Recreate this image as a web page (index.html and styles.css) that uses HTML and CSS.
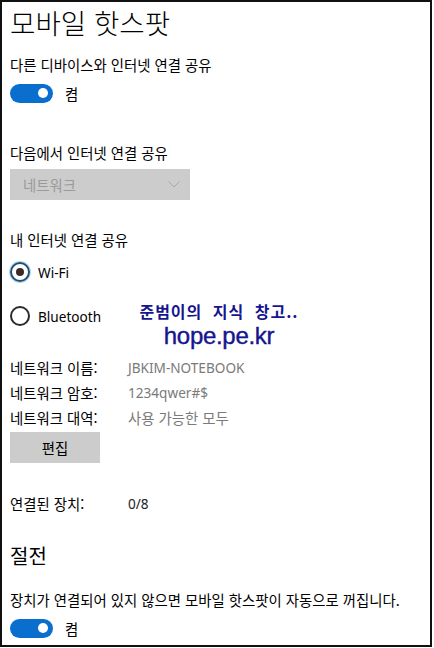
FILE: index.html
```html
<!DOCTYPE html>
<html lang="ko">
<head>
<meta charset="utf-8">
<title>모바일 핫스팟</title>
<link rel="stylesheet" href="styles.css">
</head>
<body>
<div class="page">
  <h1 class="title">모바일 핫스팟</h1>

  <div class="label label-first">다른 디바이스와 인터넷 연결 공유</div>
  <div class="toggle-row toggle-row-first">
    <span class="toggle"><span class="knob"></span></span>
    <span class="toggle-text">켬</span>
  </div>

  <div class="label label-share-from">다음에서 인터넷 연결 공유</div>
  <div class="dropdown">
    <span class="dropdown-text">네트워크</span>
    <svg class="chevron" width="12" height="7" viewBox="0 0 12 7"><path d="M0.5 0.5 L6 6 L11.5 0.5" fill="none" stroke="#a8a8a8" stroke-width="1"/></svg>
  </div>

  <div class="label label-share-over">내 인터넷 연결 공유</div>
  <div class="radio-row radio-row-first">
    <span class="radio radio-checked"><span class="dot"></span></span>
    <span class="radio-text">Wi-Fi</span>
  </div>
  <div class="radio-row radio-row-second">
    <span class="radio"></span>
    <span class="radio-text">Bluetooth</span>
  </div>

  <div class="info">
    <div class="info-row"><span class="info-key">네트워크 이름:</span><span class="info-val latin">JBKIM-NOTEBOOK</span></div>
    <div class="info-row"><span class="info-key">네트워크 암호:</span><span class="info-val latin">1234qwer#$</span></div>
    <div class="info-row"><span class="info-key">네트워크 대역:</span><span class="info-val">사용 가능한 모두</span></div>
  </div>
  <div class="button">편집</div>

  <div class="info-row connected"><span class="info-key">연결된 장치:</span><span class="info-val latin dark">0/8</span></div>

  <h2 class="subtitle">절전</h2>
  <div class="label label-desc">장치가 연결되어 있지 않으면 모바일 핫스팟이 자동으로 꺼집니다.</div>
  <div class="toggle-row toggle-row-second">
    <span class="toggle"><span class="knob"></span></span>
    <span class="toggle-text">켬</span>
  </div>

  <div class="watermark">
    <div class="wm-line1">준범이의 지식 창고..</div>
    <div class="wm-line2">hope.pe.kr</div>
  </div>
</div>
</body>
</html>
```
FILE: styles.css
```css
html, body {
  margin: 0;
  padding: 0;
  background: #fff;
}
body {
  font-family: "Noto Sans CJK KR", sans-serif;
  color: #000;
  font-size: 14.4px;
}
.page {
  position: relative;
  box-sizing: border-box;
  width: 432px;
  height: 647px;
  border: 2px solid #111;
  padding-left: 8px;
  overflow: hidden;
}
.title {
  margin: 0;
  font-family: "Noto Sans CJK KR", sans-serif;
  font-weight: 300;
  font-size: 27.6px;
  line-height: 40px;
  height: 40px;
}
.label {
  font-family: "Noto Sans CJK KR", sans-serif;
  line-height: 20px;
  height: 20px;
  white-space: nowrap;
}
.label-first { margin-top: 13px; }
.label-share-from { margin-top: 40px; }
.label-share-over { margin-top: 30px; }
.label-desc { margin-top: 19px; }

.toggle-row {
  display: flex;
  align-items: center;
  height: 20px;
}
.toggle-row-first { margin-top: 8px; }
.toggle-row-second { margin-top: 8px; }
.toggle {
  box-sizing: border-box;
  width: 43px;
  height: 19px;
  border-radius: 10px;
  background: #0a6ecf;
  display: flex;
  align-items: center;
  justify-content: flex-end;
  padding-right: 5px;
}
.knob {
  width: 10px;
  height: 10px;
  border-radius: 50%;
  background: #fff;
}
.toggle-text {
  margin-left: 12px;
}

.dropdown {
  margin-top: 6px;
  box-sizing: border-box;
  width: 180px;
  height: 31px;
  background: #cccccc;
  display: flex;
  align-items: center;
  justify-content: space-between;
  padding: 0 10px 0 13px;
}
.dropdown-text {
  color: #9a9a9a;
}
.chevron { display: block; }

.radio-row {
  display: flex;
  align-items: center;
  height: 24px;
}
.radio-row-first { margin-top: 10px; }
.radio-row-second { margin-top: 20px; }
.radio {
  box-sizing: border-box;
  width: 20px;
  height: 20px;
  border-radius: 50%;
  border: 2px solid #2b2b2b;
  display: flex;
  align-items: center;
  justify-content: center;
}
.radio-checked {
  border-color: #1f4f73;
  box-shadow: 0 0 0 1px #b9d6ec;
}
.dot {
  width: 8px;
  height: 8px;
  border-radius: 50%;
  background: #3a2a28;
}
.radio-text {
  margin-left: 8px;
  font-family: "Noto Sans", sans-serif;
  font-size: 13.6px;
}

.info { margin-top: 27px; }
.info-row {
  display: flex;
  align-items: center;
  height: 25px;
  line-height: 25px;
  white-space: nowrap;
}
.info-key {
  width: 118px;
}
.info-val {
  color: #7a7a7a;
}
.info-val.latin {
  font-family: "Noto Sans", sans-serif;
  font-size: 13.6px;
}
.info-val.dark { color: #222; }

.button {
  margin-top: 2px;
  width: 90px;
  height: 31px;
  background: #cccccc;
  display: flex;
  align-items: center;
  justify-content: center;
}
.connected {
  margin-top: 28px;
}
.subtitle {
  margin: 25px 0 0 0;
  font-family: "Noto Sans CJK KR", sans-serif;
  font-weight: 400;
  font-size: 20px;
  line-height: 30px;
  height: 30px;
}

.watermark {
  position: absolute;
  left: 132px;
  top: 298px;
  width: 170px;
  text-align: center;
  color: #15158f;
}
.wm-line1 {
  font-family: "Noto Sans CJK KR", sans-serif;
  font-weight: 700;
  font-size: 16px;
  line-height: 22px;
  letter-spacing: 1px;
  word-spacing: 5px;
  white-space: nowrap;
}
.wm-line2 {
  font-family: "Liberation Sans", sans-serif;
  font-size: 24px;
  line-height: 26px;
  letter-spacing: -0.3px;
  -webkit-text-stroke: 0.4px #15158f;
  margin-top: 1px;
  white-space: nowrap;
}
```
